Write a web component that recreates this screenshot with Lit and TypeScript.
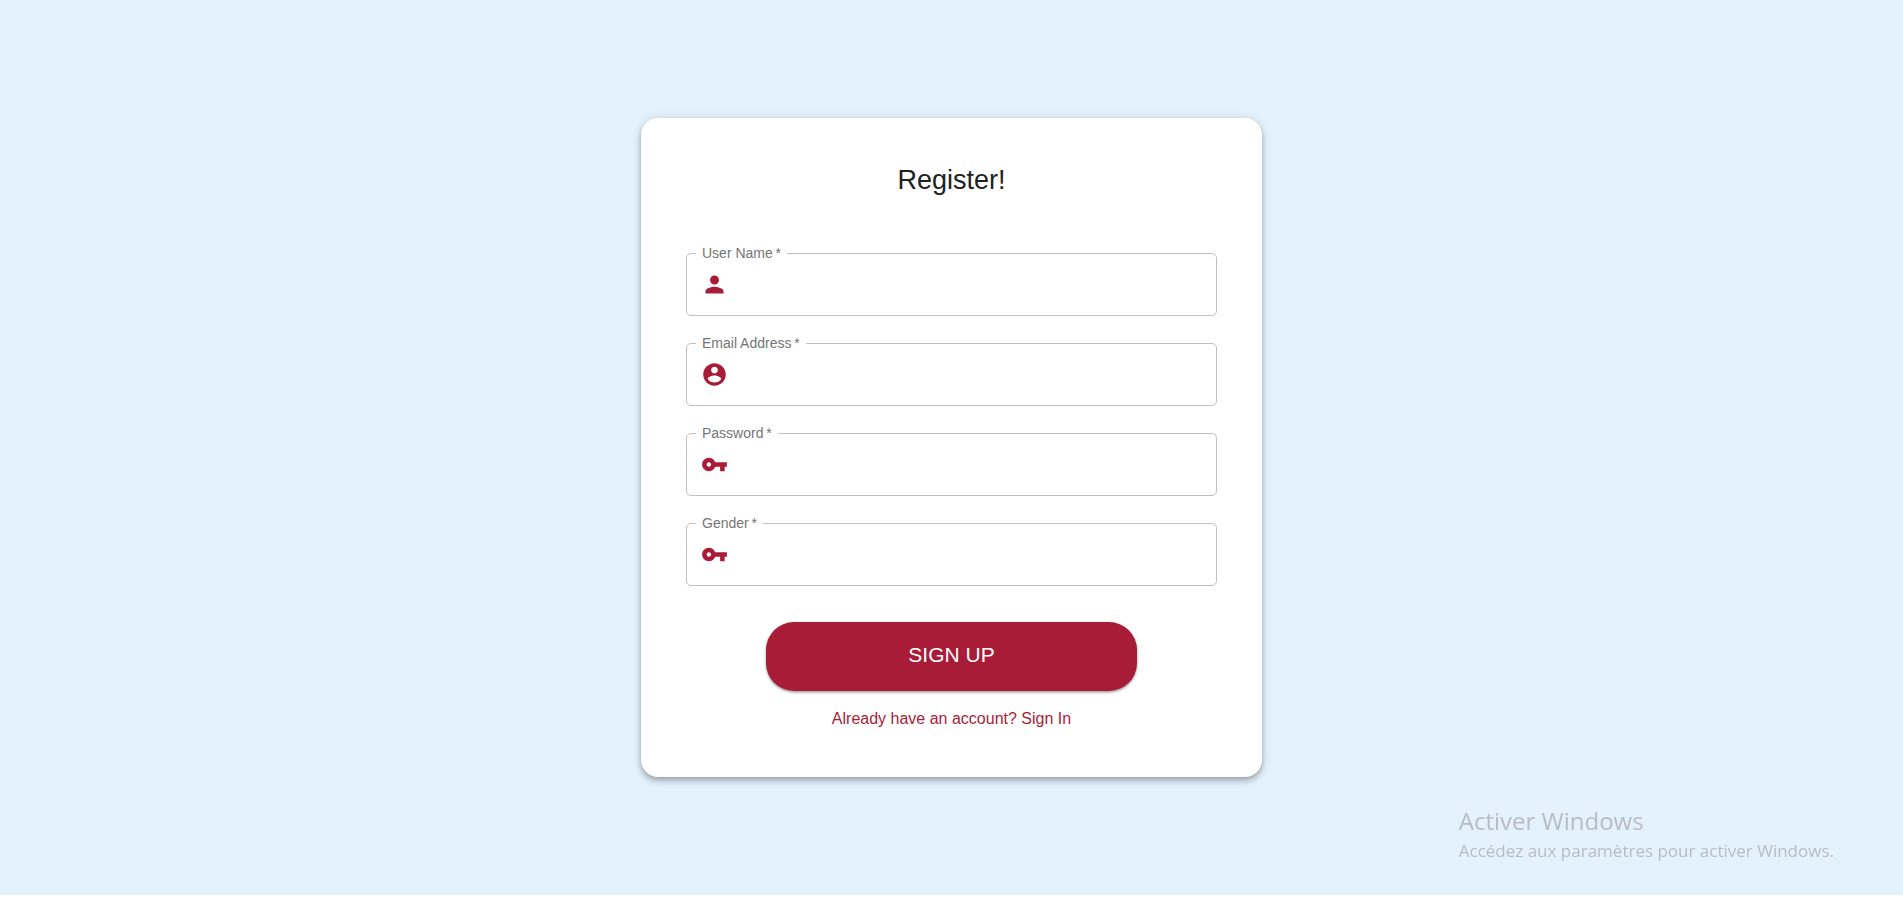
import { LitElement, html, css, svg } from "lit";
import { customElement } from "lit/decorators.js";

const icons = {
  person: svg`<path d="M12 12c2.21 0 4-1.79 4-4s-1.79-4-4-4-4 1.79-4 4 1.79 4 4 4zm0 2c-2.67 0-8 1.34-8 4v2h16v-2c0-2.66-5.33-4-8-4z"/>`,
  account: svg`<path d="M12 2C6.48 2 2 6.48 2 12s4.48 10 10 10 10-4.48 10-10S17.52 2 12 2zm0 3c1.66 0 3 1.34 3 3s-1.34 3-3 3-3-1.34-3-3 1.34-3 3-3zm0 14.200c-2.500 0-4.710-1.280-6-3.220.03-1.990 4-3.080 6-3.080 1.990 0 5.970 1.090 6 3.080-1.290 1.940-3.500 3.220-6 3.220z"/>`,
  key: svg`<path d="M12.650 10C11.830 7.670 9.610 6 7 6c-3.310 0-6 2.690-6 6s2.690 6 6 6c2.610 0 4.830-1.670 5.650-4H17v4h4v-4h2v-4H12.650zM7 14c-1.100 0-2-.9-2-2s.9-2 2-2 2 .9 2 2-.9 2-2 2z"/>`,
};

const fields = [
  { id: "username", label: "User Name", type: "text", icon: icons.person },
  { id: "email", label: "Email Address", type: "email", icon: icons.account },
  { id: "password", label: "Password", type: "password", icon: icons.key },
  { id: "gender", label: "Gender", type: "text", icon: icons.key },
];

@customElement("app-root")
export class AppRoot extends LitElement {
  static styles = css`
    :host {
      display: block;
      font-family: "Liberation Sans", Arial, sans-serif;
      background: #fff;
    }
    * {
      box-sizing: border-box;
    }
    .page {
      display: flex;
      align-items: center;
      justify-content: center;
      min-height: calc(100vh - 12px);
      padding: 16px;
      background: #e3f2fd;
    }
    .card {
      width: 100%;
      max-width: 621px;
      padding: 45px;
      border-radius: 17px;
      background: #fff;
      box-shadow: 0 2px 5px -1px rgba(0, 0, 0, 0.2), 0 5px 6px rgba(0, 0, 0, 0.14),
        0 1px 11px rgba(0, 0, 0, 0.12);
    }
    .title {
      margin: 0 0 48px;
      font-size: 27px;
      line-height: 35px;
      font-weight: 400;
      text-align: center;
      color: #212121;
    }
    .form {
      display: flex;
      flex-direction: column;
      gap: 20px;
    }
    .field {
      min-width: 0;
      margin: 0;
      padding: 0 9px 7px;
      border: 1px solid #c0c0c0;
      border-radius: 5px;
    }
    .legend {
      padding: 0 6px;
      font-size: 14px;
      line-height: 15px;
      height: 15px;
      color: #757575;
    }
    .row {
      display: flex;
      align-items: center;
      gap: 9px;
      height: 47px;
      padding: 0 5px;
    }
    .icon {
      flex: none;
      width: 27px;
      height: 27px;
      fill: #a81c38;
    }
    .input {
      flex: 1;
      min-width: 0;
      height: 27px;
      padding: 0;
      border: 0;
      outline: 0;
      background: none;
      font: inherit;
      font-size: 18px;
      color: #212121;
    }
    .submit {
      align-self: center;
      width: 70%;
      height: 69px;
      margin-top: 16px;
      padding: 0 0 3px;
      border: 0;
      border-radius: 28px;
      background: #a81c38;
      color: #fff;
      font: inherit;
      font-size: 21px;
      cursor: pointer;
      box-shadow: 0 1px 3px rgba(0, 0, 0, 0.3), 0 2px 2px rgba(0, 0, 0, 0.14);
    }
    .switch {
      margin: 15px 0 0;
      font-size: 16px;
      line-height: 26px;
      text-align: center;
    }
    .link {
      color: #a81c38;
      text-decoration: none;
    }
    .watermark {
      position: fixed;
      right: 69px;
      bottom: 43px;
      font-family: "Open Sans", "Segoe UI", sans-serif;
      color: #b9bdc1;
      pointer-events: none;
    }
    .watermark-title {
      margin: 0;
      font-size: 24px;
      line-height: 34px;
    }
    .watermark-text {
      margin: 0;
      font-size: 17px;
      line-height: 26px;
    }
  `;

  render() {
    return html`
      <main class="page">
        <section class="card">
          <h1 class="title">Register!</h1>
          <form class="form" @submit=${(e: Event) => e.preventDefault()}>
            ${fields.map(
              (f) => html`
                <fieldset class="field">
                  <legend class="legend"><label for=${f.id}>${f.label}&thinsp;*</label></legend>
                  <div class="row">
                    <svg class="icon" viewBox="0 0 24 24" aria-hidden="true">${f.icon}</svg>
                    <input class="input" id=${f.id} name=${f.id} type=${f.type} required />
                  </div>
                </fieldset>
              `
            )}
            <button class="submit" type="submit">SIGN UP</button>
          </form>
          <p class="switch"><a class="link" href="#signin">Already have an account? Sign In</a></p>
        </section>
      </main>
      <aside class="watermark">
        <p class="watermark-title">Activer Windows</p>
        <p class="watermark-text">Accédez aux paramètres pour activer Windows.</p>
      </aside>
    `;
  }
}
